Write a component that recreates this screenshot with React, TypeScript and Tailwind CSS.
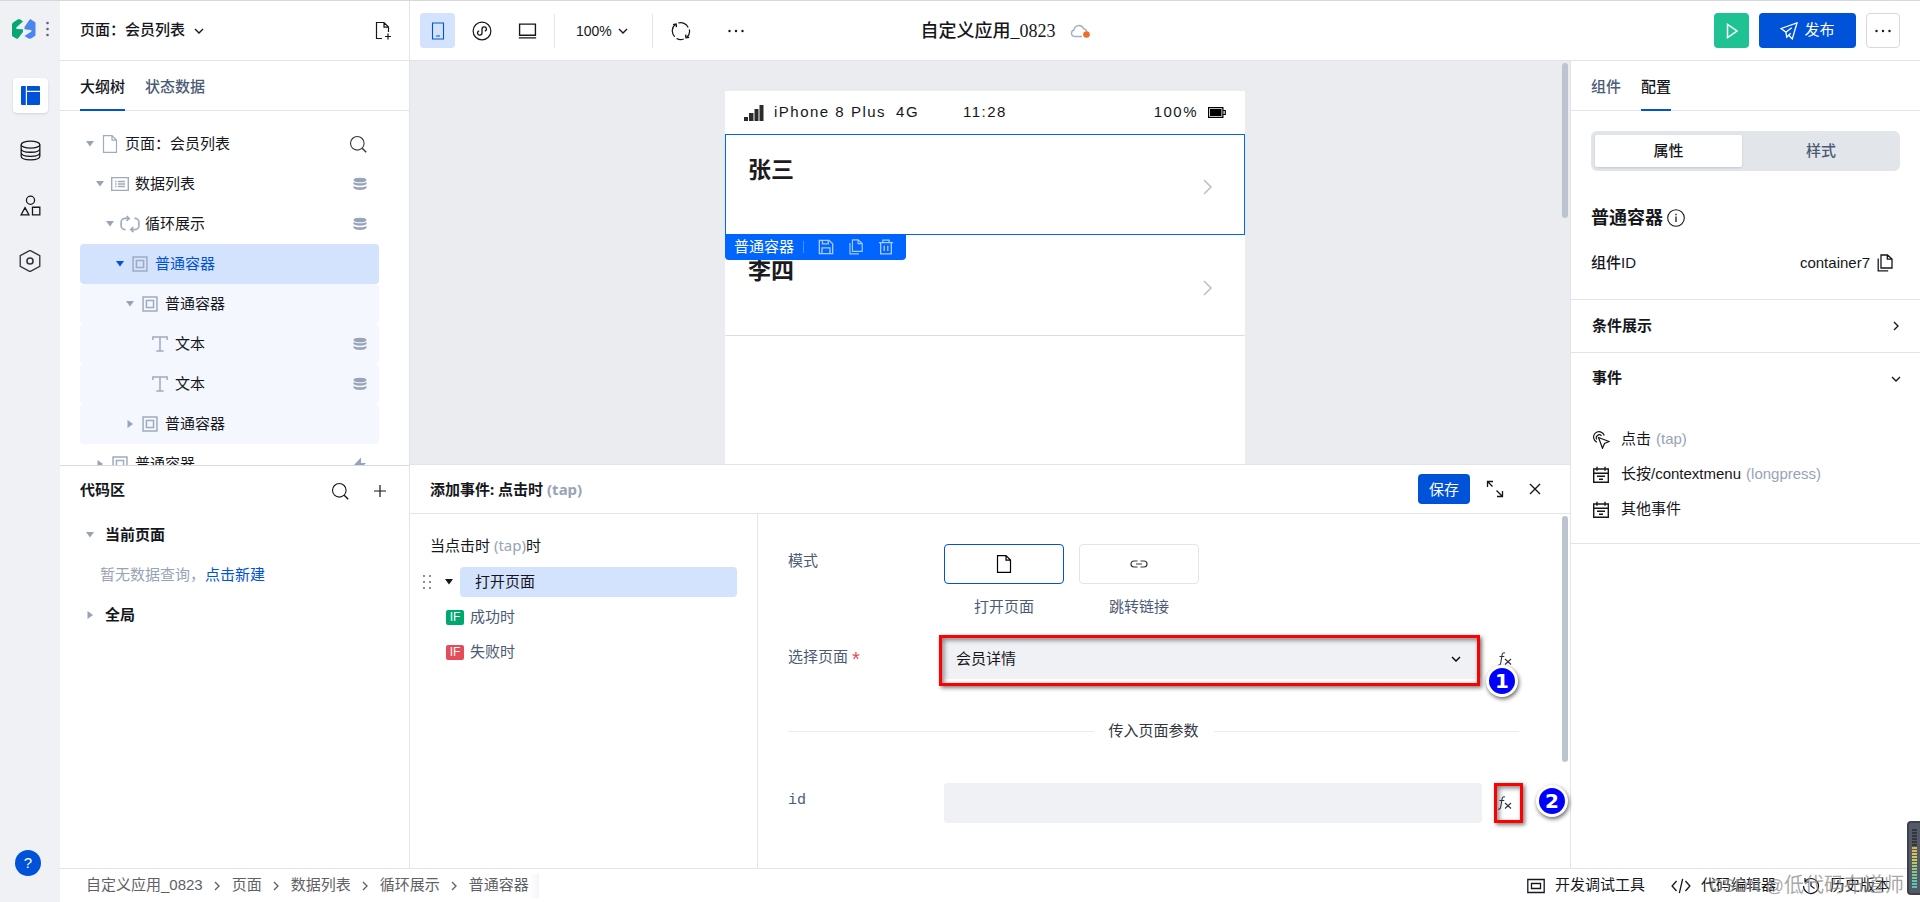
import type { ReactNode } from "react";
import clsx from "clsx";

type IconProps = {
  size?: number;
  className?: string;
  children?: ReactNode;
};

function Icon({ size = 18, className, children }: IconProps) {
  return (
    <svg
      width={size}
      height={size}
      viewBox="0 0 18 18"
      fill="none"
      stroke="currentColor"
      strokeWidth="1.1"
      className={clsx("shrink-0", className)}
      aria-hidden="true"
    >
      {children}
    </svg>
  );
}

const ChevronDown = ({ className }: IconProps) => (
  <Icon size={12} className={className}>
    <path d="M3 6l6 6 6-6" strokeWidth="2" />
  </Icon>
);

const ChevronRight = ({ className }: IconProps) => (
  <Icon size={12} className={className}>
    <path d="M6 3l6 6-6 6" strokeWidth="2" />
  </Icon>
);

const FileIcon = ({ className, size }: IconProps) => (
  <Icon className={className} size={size}>
    <path d="M2.500 .6h8.500l4.500 4.500v12.300h-13z M11 .6v4.500h4.500" strokeWidth="1.200" />
  </Icon>
);

const SearchIcon = () => (
  <Icon>
    <circle cx="8.300" cy="8.300" r="6.800" />
    <path d="M13.200 13.200l4 4" strokeWidth="1.400" />
  </Icon>
);

const CopyIcon = ({ className, size }: IconProps) => (
  <Icon className={className} size={size}>
    <path d="M5 1h6.500l4.500 4v9H5z M11.300 1v4.200H16 M2.200 4.500v12.300h10" strokeWidth="1.300" />
  </Icon>
);

const ContainerIcon = () => (
  <Icon size={16}>
    <path d="M1.200 1.200h15.600v15.600H1.200z M5 5h8v8H5z" strokeWidth="1.700" />
  </Icon>
);

const ListIcon = () => (
  <Icon>
    <path d="M.7 2.600h16.600v12.800H.7z" strokeWidth="1.400" />
    <path d="M4 6.500h1.500M4 9h1.500M4 11.500h1.500M7 6.500h7M7 9h7M7 11.500h7" strokeWidth="1.300" />
  </Icon>
);

const LoopIcon = () => (
  <Icon size={20}>
    <path
      d="M5 14H4.500a3.500 3.500 0 0 1-3.500-3.500V7.500A3.500 3.500 0 0 1 4.500 4H8 M6 1.800L8.300 4 6 6.300 M13 4h.5A3.500 3.500 0 0 1 17 7.500v3a3.500 3.500 0 0 1-3.500 3.500H10 M12 11.700L9.700 14l2.300 2.300"
      strokeWidth="1.500"
    />
  </Icon>
);

const TextIcon = () => (
  <Icon size={16}>
    <path d="M1 4.500V1.200h16v3.300 M9 1.200v15.600 M4.800 16.800h8.400" strokeWidth="1.700" />
  </Icon>
);

const DataIcon = () => (
  <svg width="14" height="14" viewBox="0 0 14 14" fill="currentColor" aria-hidden="true">
    <ellipse cx="7" cy="3" rx="6.500" ry="2.300" />
    <path d="M.5 5c2.500 1.800 10.500 1.800 13 0v2c-2.500 2.300-10.500 2.300-13 0z" />
    <path d="M.5 9c2.500 1.800 10.500 1.800 13 0v1.700c-2 3-11 3-13 0z" />
  </svg>
);

const BoltIcon = () => (
  <svg width="14" height="14" viewBox="0 0 14 14" fill="currentColor" aria-hidden="true">
    <path d="M8 .5L1 8h5l-1 6 8-8H8z" />
  </svg>
);

const CalendarIcon = () => (
  <Icon>
    <path d="M1.700 3h14.600v13.300H1.700z M1.700 7.200h14.600 M5 .8v4 M13 .8v4 M5 10.300h8 M7 13.300h4" strokeWidth="1.400" />
  </Icon>
);

const TapIcon = () => (
  <Icon>
    <path d="M6.500 6.500l10.500 4-4.500 2-2 4.800z" strokeWidth="1.200" />
    <path d="M5 11.300A5.500 5.500 0 1 1 12.300 4.500 M4.800 8.500A3 3 0 0 1 9.500 4.800" strokeWidth="1.200" />
  </Icon>
);

const FxIcon = () => (
  <svg width="14" height="14" viewBox="0 0 14 14" fill="none" stroke="#33363f" strokeWidth="1.100" aria-hidden="true">
    <path d="M7 1C5 .3 4.400 1.300 4.100 3L2.800 10.500C2.500 12.500 1.800 13.500.3 12.900 M1.500 4.500h4.800 M7 7l6 5.500 M13 7L7 12.500" />
  </svg>
);

const Caret = ({ open = true, className }: { open?: boolean; className?: string }) => (
  <svg width="8" height="8" viewBox="0 0 8 8" fill="currentColor" className={clsx("shrink-0", className)} aria-hidden="true">
    {open ? <path d="M0 1h8L4 6.500z" /> : <path d="M1.500 0v8L7 4z" />}
  </svg>
);

const Dots = () => (
  <svg width="18" height="4" viewBox="0 0 18 4" fill="#15171c" aria-hidden="true">
    <circle cx="2.500" cy="2" r="1.200" />
    <circle cx="9" cy="2" r="1.200" />
    <circle cx="15.500" cy="2" r="1.200" />
  </svg>
);

type TreeNode = {
  label: string;
  depth: number;
  icon: ReactNode;
  open?: boolean;
  leaf?: boolean;
  state?: "selected" | "child";
  end?: ReactNode;
};

const treeNodes: TreeNode[] = [
  { label: "页面：会员列表", depth: 0, icon: <FileIcon />, end: <SearchIcon /> },
  { label: "数据列表", depth: 1, icon: <ListIcon />, end: <DataIcon /> },
  { label: "循环展示", depth: 2, icon: <LoopIcon />, end: <DataIcon /> },
  { label: "普通容器", depth: 3, icon: <ContainerIcon />, state: "selected" },
  { label: "普通容器", depth: 4, icon: <ContainerIcon />, state: "child" },
  { label: "文本", depth: 5, icon: <TextIcon />, leaf: true, state: "child", end: <DataIcon /> },
  { label: "文本", depth: 5, icon: <TextIcon />, leaf: true, state: "child", end: <DataIcon /> },
  { label: "普通容器", depth: 4, icon: <ContainerIcon />, open: false, state: "child" },
  { label: "普通容器", depth: 1, icon: <ContainerIcon />, open: false, end: <BoltIcon /> },
];

const crumbs = ["自定义应用_0823", "页面", "数据列表", "循环展示", "普通容器"];

const events = [
  { label: "点击", hint: "(tap)", icon: <TapIcon /> },
  { label: "长按/contextmenu", hint: "(longpress)", icon: <CalendarIcon /> },
  { label: "其他事件", hint: "", icon: <CalendarIcon /> },
];

const meterBars = [
  "bg-[#33363f]", "bg-[#33363f]", "bg-[#33363f]", "bg-[#33363f]", "bg-[#33363f]", "bg-[#33363f]",
  "bg-[#d9b24a]", "bg-[#dcb94c]", "bg-[#dbc350]", "bg-[#d3cb55]", "bg-[#c4cd5c]", "bg-[#b3cd63]",
  "bg-[#a3cd6c]", "bg-[#94cc75]", "bg-[#86cb80]", "bg-[#79ca8b]", "bg-[#6dc998]", "bg-[#62c8a5]",
  "bg-[#58c8b0]", "bg-[#4fc8ba]",
];

function Rail() {
  return (
    <nav className="flex w-[60px] shrink-0 flex-col items-center bg-[#f0f1f5]">
      <div className="mt-4 flex h-6 w-full items-center gap-2.5 pl-3">
        <svg width="24" height="20" viewBox="0 0 24 20" aria-hidden="true">
          <path d="M0 5.500Q0 4 1.500 3.300L6 .3 8 .3 11 2.500 4.500 8.300Q3.300 9.500 5 10L11 10.300 11 13 6 19.500 4.500 19.800 0 17z" fill="#07a870" />
          <path d="M23.500 15.500Q23.500 16.800 22.300 17.500L18.500 19.800 16.500 19.500 12.500 17 19 12.800Q20.500 11.500 18.500 11L12.500 10.300V8L17 1.500 18.300 0 23.500 3.500z" fill="#4a86f0" />
        </svg>
        <svg width="3" height="16" viewBox="0 0 3 16" fill="#5a6577" aria-hidden="true">
          <circle cx="1.500" cy="2" r="1.300" />
          <circle cx="1.500" cy="8" r="1.300" />
          <circle cx="1.500" cy="14" r="1.300" />
        </svg>
      </div>
      <button type="button" aria-label="页面设计" className="mt-[37px] grid size-[35px] place-items-center rounded bg-white text-[#0052d9] shadow">
        <svg width="19" height="19" viewBox="0 0 19 19" fill="currentColor" aria-hidden="true">
          <path d="M1 0h3.800v19H1a1 1 0 0 1-1-1V1a1 1 0 0 1 1-1z M6 0h12a1 1 0 0 1 1 1v3.800H6z M6 6h13v12a1 1 0 0 1-1 1H6z" />
        </svg>
      </button>
      <button type="button" aria-label="数据" className="mt-5 grid size-[35px] place-items-center">
        <Icon size={21}>
          <ellipse cx="9" cy="4" rx="8" ry="3" />
          <path d="M1 4v10c0 4 16 4 16 0V4 M1 7.500c0 4 16 4 16 0 M1 11c0 4 16 4 16 0" />
        </Icon>
      </button>
      <button type="button" aria-label="组件" className="mt-5 grid size-[35px] place-items-center">
        <Icon size={21}>
          <circle cx="9" cy="4.500" r="3.500" />
          <path d="M4.300 10.800L7.700 17H.9z M10.700 10.500H17V17h-6.300z" />
        </Icon>
      </button>
      <button type="button" aria-label="设置" className="mt-5 grid size-[35px] place-items-center text-[#33363f]">
        <Icon size={22}>
          <path d="M9 .3l8 4.400v8.600L9 17.700l-8-4.400V4.700z" />
          <circle cx="9" cy="9" r="2.500" strokeWidth="1.300" />
        </Icon>
      </button>
      <button type="button" className="mt-auto mr-1 mb-[26px] size-[26px] rounded-full bg-[#0052d9] text-white">
        ?
      </button>
    </nav>
  );
}

function Header() {
  return (
    <header className="grid h-[60px] shrink-0 grid-cols-[1fr_auto_1fr] items-center border-b border-[#e1e4ea]">
      <div className="flex h-full items-center">
        <div className="flex h-full w-[350px] items-center justify-between border-r border-[#e1e4ea] pr-4 pl-5">
          <button type="button" className="flex items-center gap-2 font-medium">
            页面：会员列表
            <ChevronDown />
          </button>
          <button type="button" aria-label="新建页面">
            <svg width="20" height="20" viewBox="0 0 20 20" fill="none" stroke="currentColor" strokeWidth="1.200" aria-hidden="true">
              <path d="M9 17.500H3.500v-16H11l4.500 4.500v5 M11 1.500v4.700h4.500 M15 12.500v6 M12 15.500h6" />
            </svg>
          </button>
        </div>
        <button type="button" aria-label="手机" className="ml-2.5 grid size-[35px] place-items-center rounded bg-[#d3e2fd] text-[#0052d9]">
          <Icon>
            <path d="M3.500 1h11v16h-11z M7 14h4" />
          </Icon>
        </button>
        <button type="button" aria-label="小程序" className="ml-[17px]">
          <Icon size={20}>
            <circle cx="9" cy="9" r="8" />
            <path d="M6.500 8.800a2 2 0 1 0 2.500 2V7.200a2 2 0 1 1 2.500 2" strokeWidth="1.200" />
          </Icon>
        </button>
        <button type="button" aria-label="电脑" className="ml-[26px]">
          <Icon size={19}>
            <path d="M1.500 3h15v10.500h-15z M.8 16h16.400" strokeWidth="1.300" />
          </Icon>
        </button>
        <div className="ml-[17px] h-[34px] w-px bg-[#e1e4ea]" />
        <button type="button" className="ml-[21px] flex items-center gap-[5px] text-sm">
          100%
          <ChevronDown />
        </button>
        <div className="ml-[23px] h-[34px] w-px bg-[#e1e4ea]" />
        <button type="button" aria-label="刷新" className="ml-[18px]">
          <Icon size={20}>
            <path d="M3.300 14.200A7.600 7.600 0 0 1 4 3M6.500 1.800a7.600 7.600 0 0 1 9 4M16.500 7.500a7.600 7.600 0 0 1-2 7M11.500 16.200a7.600 7.600 0 0 1-6.500-.5" />
            <path d="M1.800 3.300L4.600 2.700l.3 2.800 M16.300 14.600l-2.800.5-.3-2.800" strokeWidth="1.300" />
          </Icon>
        </button>
        <button type="button" aria-label="更多" className="ml-9">
          <Dots />
        </button>
      </div>
      <h1 className="flex items-center gap-3.5 pl-[30px] font-[Liberation_Serif,Noto_Sans_CJK_SC,serif] text-lg font-medium">
        自定义应用_0823
        <svg width="20" height="14" viewBox="0 0 20 14" fill="none" stroke="#a3afc3" strokeWidth="1.400" aria-hidden="true">
          <path d="M12 12.500H4.500A3.300 3.300 0 0 1 4 6a5 5 0 0 1 9.600-1.300c2 .3 3 1.600 3.200 3" />
          <circle cx="16.500" cy="10.500" r="3.300" fill="#ed6d2d" stroke="none" />
        </svg>
      </h1>
      <div className="flex items-center justify-end gap-2.5 pr-5">
        <button type="button" aria-label="预览" className="grid size-[35px] place-items-center rounded bg-[#1fc292] text-white">
          <Icon>
            <path d="M4.500 2.500v13L14 9z" strokeWidth="1.500" />
          </Icon>
        </button>
        <button type="button" className="flex h-[35px] w-[97px] items-center justify-center gap-1.5 rounded bg-[#0052d9] text-white">
          <Icon>
            <path d="M1 6.500L17 .9 12.300 17l-3.600-3.800-2 2-.8-5z M5.900 10.200l5.800-4.500 M8.700 13.200l2-1.900" strokeWidth="1.300" />
          </Icon>
          发布
        </button>
        <button type="button" aria-label="更多操作" className="grid h-[35px] w-[34px] place-items-center rounded border border-[#d5d9e2]">
          <Dots />
        </button>
      </div>
    </header>
  );
}

function TreeRow({ node }: { node: TreeNode }) {
  const selected = node.state === "selected";
  return (
    <li
      className={clsx(
        "flex h-10 items-center rounded pr-3",
        selected && "bg-[#d3e2fd] text-[#0052d9]",
        node.state === "child" && "bg-[#f4f7fe]"
      )}
      style={{ paddingLeft: 6 + node.depth * 10 }}
    >
      <span className={clsx("mr-1.5 w-2", selected ? "text-[#0052d9]" : "text-[#97a3b7]")}>
        {!node.leaf && <Caret open={node.open ?? true} />}
      </span>
      <span className="grid w-5 place-items-center text-[#a0abbf]">{node.icon}</span>
      <span className="ml-[5px]">{node.label}</span>
      <span className={clsx("ml-auto", node.depth > 0 ? "text-[#97a3b7]" : "text-[#33363f]")}>{node.end}</span>
    </li>
  );
}

function Outline() {
  return (
    <aside className="flex w-[350px] shrink-0 flex-col border-r border-[#e1e4ea]">
      <div className="flex h-[50px] shrink-0 gap-5 border-b border-[#e1e4ea] px-5 font-medium" role="tablist">
        <button type="button" role="tab" aria-selected="true" className="-mb-px border-b-2 border-[#0052d9] pt-1">
          大纲树
        </button>
        <button type="button" role="tab" aria-selected="false" className="-mb-px border-b-2 border-transparent pt-1 text-[#4b5b76]">
          状态数据
        </button>
      </div>
      <ul className="min-h-0 flex-1 overflow-hidden pt-[13px] pr-[30px] pl-5">
        {treeNodes.map((node, i) => (
          <TreeRow key={i} node={node} />
        ))}
      </ul>
      <section className="h-[403px] shrink-0 border-t border-[#d5d9e2] px-5">
        <div className="flex h-[49px] items-center">
          <h2 className="flex-1 font-bold">代码区</h2>
          <button type="button" aria-label="搜索">
            <SearchIcon />
          </button>
          <button type="button" aria-label="新建" className="ml-[22px]">
            <Icon>
              <path d="M9 3v12M3 9h12" strokeWidth="1.200" />
            </Icon>
          </button>
        </div>
        <div className="flex h-10 items-center gap-[11px] pl-1.5 font-bold">
          <Caret className="text-[#97a3b7]" />
          当前页面
        </div>
        <p className="flex h-10 items-center pl-5 text-[#97a3b7]">
          暂无数据查询，
          <a href="#new" className="text-[#0052d9]">
            点击新建
          </a>
        </p>
        <div className="flex h-10 items-center gap-[11px] pl-1.5 font-bold">
          <Caret open={false} className="text-[#97a3b7]" />
          全局
        </div>
      </section>
    </aside>
  );
}

function ListItem({ name, active }: { name: string; active?: boolean }) {
  return (
    <div
      className={clsx(
        "relative flex h-[101px] items-center justify-between border pr-7 pl-[22px]",
        active ? "border-[#0064ff]" : "border-transparent border-b-[#d9dbdf]"
      )}
    >
      <h3 className="mb-[30px] text-[23px] leading-8 font-bold text-[#1c1c1e]">{name}</h3>
      <Icon className="mt-1 text-[#bfc1c6]">
        <path d="M6 2l7 7-7 7" strokeWidth="1.600" />
      </Icon>
      {active && (
        <div className="absolute top-full -left-px z-10 flex h-[26px] w-[181px] items-center rounded-b bg-[#0064ff] pl-[9px] text-white">
          普通容器
          <span className="mr-3.5 ml-[9px] h-3 w-px bg-[#4d93ff]" />
          <div className="flex gap-3.5 text-[#a9c9ff]">
            <Icon size={16}>
              <path d="M1.500 1.500h11l4 4v11h-15z M5 1.500v4h6.500v-4 M4.500 16.500V10h9v6.500" strokeWidth="1.500" />
            </Icon>
            <CopyIcon size={16} />
            <Icon size={16}>
              <path d="M1 4h16 M5.500 4V1.200h7V4 M3 4v12.800h12V4 M7 7.500v6 M11 7.500v6" strokeWidth="1.500" />
            </Icon>
          </div>
        </div>
      )}
    </div>
  );
}

function Canvas() {
  return (
    <div className="relative flex min-h-0 flex-1 justify-center overflow-hidden bg-[#ebecf0] pt-[30px] pr-2.5">
      <div className="w-[520px] bg-white">
        <div className="grid h-[43px] grid-cols-3 items-center px-[19px] tracking-widest">
          <div className="flex items-center gap-2.5 whitespace-nowrap">
            <svg width="20" height="16" viewBox="0 0 20 16" fill="#2b2b2b" className="shrink-0" aria-hidden="true">
              <path d="M0 12h4v4H0z M5 8h4.500v8H5z M10.500 4h4v12h-4z M15.500 0h4v16h-4z" />
            </svg>
            <span>iPhone 8 Plus</span>
            <span>4G</span>
          </div>
          <span className="text-center">11:28</span>
          <div className="flex items-center justify-end gap-2.5">
            100%
            <svg width="18" height="11" viewBox="0 0 18 11" className="shrink-0" aria-hidden="true">
              <path d="M.6.600h14.300v9.800H.6z M15 3.500h2.300v4H15" fill="none" stroke="#000" strokeWidth="1.200" />
              <path d="M2 2h11.500v7H2z" />
            </svg>
          </div>
        </div>
        <ListItem name="张三" active />
        <ListItem name="李四" />
      </div>
      <div className="absolute top-0.5 right-0.5 h-[155px] w-1.5 rounded-full bg-[#bcc4d0]" />
    </div>
  );
}

const Badge = ({ children, className }: { children: ReactNode; className: string }) => (
  <span
    className={clsx(
      "absolute grid size-8 place-items-center rounded-full border-3 border-white bg-[#0000ff] font-[DejaVu_Sans,sans-serif] text-xl leading-none font-bold text-white shadow-[1px_2px_4px_rgba(0,0,0,0.6)]",
      className
    )}
  >
    {children}
  </span>
);

const redFrame =
  "pointer-events-none absolute border-3 border-[#ff0000] shadow-[2px_2px_4px_rgba(0,0,0,0.5),inset_2px_2px_5px_rgba(0,0,0,0.5)]";

function ActionForm() {
  return (
    <form className="relative min-w-0 flex-1 pt-[30px] pr-[51px] pl-[30px] leading-[22px] text-[#4b5b76]">
      <div className="flex">
        <span className="w-[156px] shrink-0 pt-1.5">模式</span>
        <div className="flex gap-[15px] text-center">
          <label className="w-[120px]">
            <input type="radio" name="mode" defaultChecked className="peer sr-only" />
            <span className="mb-3 grid h-10 place-items-center rounded border border-[#e1e4ea] text-black peer-checked:border-[#0052d9]">
              <FileIcon />
            </span>
            打开页面
          </label>
          <label className="w-[120px]">
            <input type="radio" name="mode" className="peer sr-only" />
            <span className="mb-3 grid h-10 place-items-center rounded border border-[#e1e4ea] text-[#33363f] peer-checked:border-[#0052d9]">
              <Icon>
                <path d="M7.500 6H4a3 3 0 0 0 0 6h3.500 M10.500 6H14a3 3 0 0 1 0 6h-3.500 M6 9h6" strokeWidth="1.200" />
              </Icon>
            </span>
            跳转链接
          </label>
        </div>
      </div>

      <div className="mt-[21px] flex">
        <label htmlFor="page" className="w-[156px] shrink-0 pt-[7px]">
          选择页面
          <span className="ml-1 align-sub text-xl leading-none text-[#e34d59]">*</span>
        </label>
        <div className="relative flex-1">
          <select id="page" className="h-10 w-full appearance-none rounded bg-[#f0f1f5] px-3 text-[#15171c]">
            <option>会员详情</option>
          </select>
          <ChevronDown className="pointer-events-none absolute top-3.5 right-5 text-black" />
          <div className={clsx(redFrame, "-top-1 right-0.5 -bottom-[7px] -left-[5px]")} />
        </div>
        <button type="button" aria-label="选择页面表达式" className="relative ml-4 w-[21px]">
          <FxIcon />
          <Badge className="top-[26px] -left-3">1</Badge>
        </button>
      </div>

      <div className="my-[41px] flex items-center gap-[15px] text-[#33363f]">
        <div className="h-px flex-1 bg-[#e9ebef]" />
        传入页面参数
        <div className="h-px flex-1 bg-[#e9ebef]" />
      </div>

      <div className="flex">
        <label htmlFor="param-id" className="w-[156px] shrink-0 pt-[7px] font-[Liberation_Mono,monospace]">
          id
        </label>
        <input id="param-id" className="h-10 min-w-0 flex-1 rounded bg-[#f0f1f5] px-3 text-[#15171c]" />
        <button type="button" aria-label="id表达式" className="relative ml-4 w-[21px]">
          <FxIcon />
          <span className={clsx(redFrame, "inset-y-0 -right-1 -left-1")} />
          <Badge className="top-0.5 left-[38px]">2</Badge>
        </button>
      </div>
      <div className="absolute top-0.5 right-0.5 h-[246px] w-1.5 rounded-full bg-[#bcc4d0]" />
    </form>
  );
}

function EventPanel() {
  return (
    <section className="flex h-[404px] shrink-0 flex-col border-t border-[#e1e4ea]">
      <div className="flex h-[49px] shrink-0 items-center border-b border-[#e1e4ea] px-5 font-[Noto_Sans,Noto_Sans_CJK_SC,sans-serif]">
        <h2 className="flex-1 font-bold">
          添加事件: 点击时 <span className="text-[#97a3b7]">(tap)</span>
        </h2>
        <button type="button" className="h-[30px] w-[52px] rounded bg-[#0052d9] text-white">
          保存
        </button>
        <button type="button" aria-label="展开" className="ml-4">
          <Icon>
            <path d="M1.500 7V1.500H7 M1.500 1.500l5 5 M16.500 11v5.500H11 M16.500 16.500l-6-6" strokeWidth="1.300" />
          </Icon>
        </button>
        <button type="button" aria-label="关闭" className="mr-1.5 ml-[22px]">
          <Icon>
            <path d="M4 4l10 10M14 4L4 14" strokeWidth="1.400" />
          </Icon>
        </button>
      </div>
      <div className="flex min-h-0 flex-1">
        <div className="w-[348px] shrink-0 border-r border-[#e1e4ea] pt-5 pr-5 pl-3">
          <p className="pl-2 font-[Noto_Sans,Noto_Sans_CJK_SC,sans-serif] leading-[22px]">
            当点击时 <span className="text-[#97a3b7]">(tap)</span>时
          </p>
          <div className="mt-[11px] flex h-[30px] items-center">
            <svg width="10" height="16" viewBox="0 0 10 16" fill="#8b8f98" aria-hidden="true">
              <path d="M1 1h2v2H1z M7 1h2v2H7z M1 7h2v2H1z M7 7h2v2H7z M1 13h2v2H1z M7 13h2v2H7z" />
            </svg>
            <Caret className="ml-[13px]" />
            <button type="button" className="ml-[7px] h-full flex-1 rounded bg-[#d3e2fd] pl-[15px] text-left">
              打开页面
            </button>
          </div>
          {[
            { label: "成功时", color: "bg-[#00a870]" },
            { label: "失败时", color: "bg-[#e34d59]" },
          ].map((branch) => (
            <div key={branch.label} className="mt-[5px] flex h-[30px] items-center gap-1.5 pl-6 text-[#4b5b76]">
              <span className={clsx("grid h-[15px] w-[18px] place-items-center rounded-xs text-xs leading-none text-white", branch.color)}>
                IF
              </span>
              {branch.label}
            </div>
          ))}
        </div>
        <ActionForm />
      </div>
    </section>
  );
}

function Inspector() {
  return (
    <aside className="w-[350px] shrink-0 border-l border-[#e1e4ea]">
      <div className="flex h-[50px] gap-5 border-b border-[#e1e4ea] px-5 font-medium" role="tablist">
        <button type="button" role="tab" aria-selected="false" className="-mb-px border-b-2 border-transparent pt-1 text-[#4b5b76]">
          组件
        </button>
        <button type="button" role="tab" aria-selected="true" className="-mb-px border-b-2 border-[#0052d9] pt-1">
          配置
        </button>
      </div>
      <div className="h-[189px] border-b border-[#e1e4ea] px-5 pt-5">
        <div className="flex h-10 rounded-md bg-[#e2e5ea] py-1 pl-1 font-medium">
          <button type="button" className="w-[147px] rounded-xs bg-white shadow-sm">
            属性
          </button>
          <button type="button" className="flex-1 text-[#4b5b76]">
            样式
          </button>
        </div>
        <h2 className="mt-[33px] flex items-center gap-1 text-lg leading-7 font-bold text-[#15171c]">
          普通容器
          <Icon>
            <circle cx="9" cy="9" r="8.300" />
            <path d="M9 7.500V13 M9 4.800v1.400" strokeWidth="1.300" />
          </Icon>
        </h2>
        <div className="mt-5 flex items-center">
          <span className="flex-1 font-medium">组件ID</span>
          container7
          <button type="button" aria-label="复制" className="mr-1.5 ml-1.5">
            <CopyIcon />
          </button>
        </div>
      </div>
      <button type="button" className="flex h-[53px] w-full items-center justify-between border-b border-[#e1e4ea] pr-[18px] pl-[21px] font-bold">
        条件展示
        <ChevronRight />
      </button>
      <div className="h-[191px] border-b border-[#e1e4ea] pr-[18px] pl-[21px]">
        <button type="button" className="flex h-[51px] w-full items-center justify-between font-bold">
          事件
          <ChevronDown />
        </button>
        <ul className="pt-[18px]">
          {events.map((event) => (
            <li key={event.label} className="flex h-[35px] items-center">
              {event.icon}
              <span className="mr-[5px] ml-[11px]">{event.label}</span>
              <span className="text-[#97a3b7]">{event.hint}</span>
            </li>
          ))}
        </ul>
      </div>
    </aside>
  );
}

function Footer() {
  return (
    <footer className="relative flex h-[34px] shrink-0 items-center justify-between border-t border-[#e1e4ea] pr-[30px] pl-[26px]">
      <nav className="flex items-center text-[#5f6166]">
        {crumbs.map((crumb, i) => (
          <div key={crumb} className="flex items-center">
            {i > 0 && <ChevronRight className="mr-[9px] ml-2" />}
            <a href="#crumb">{crumb}</a>
          </div>
        ))}
        <span className="h-6 w-2.5 bg-linear-to-r from-white to-[#f4f5f8]" />
      </nav>
      <div className="flex items-center gap-[26px]">
        <button type="button" className="flex items-center gap-2.5">
          <Icon>
            <path d="M.8 2.500h16.400v13H.8z M4.500 6.500h9v5h-9z" strokeWidth="1.300" />
          </Icon>
          开发调试工具
        </button>
        <button type="button" className="flex items-center gap-2.5">
          <Icon size={20}>
            <path d="M5 4.500L1 9l4 4.500 M13 4.500L17 9l-4 4.500 M10.500 2.500l-3 13" strokeWidth="1.200" />
          </Icon>
          代码编辑器
        </button>
        <button type="button" className="flex items-center gap-2.5">
          <Icon>
            <path d="M3 4.500A7.500 7.500 0 1 1 1.500 9 M3 1v4h4 M9 4.500V9l3.500 2.500" strokeWidth="1.200" />
          </Icon>
          历史版本
        </button>
      </div>
      <span className="pointer-events-none absolute right-4 text-xl text-[#8a8a8a]/75">
        <span className="text-lg">CSDN @</span>低代码布道师
      </span>
      <div className="absolute right-0 bottom-[7px] flex h-[74px] w-[13px] flex-col gap-px rounded-l border-2 border-r-0 border-[#3d414d] bg-[#555a69] px-[3px] pt-1.5">
        {meterBars.map((bar, i) => (
          <span key={i} className={clsx("h-0.5", bar)} />
        ))}
      </div>
    </footer>
  );
}

export default function App() {
  return (
    <div className="flex h-screen overflow-hidden border-t border-[#d6d7da] bg-white font-[Liberation_Sans,Noto_Sans_CJK_SC,sans-serif] text-[15px] text-[#15171c]">
      <Rail />
      <div className="flex min-w-0 flex-1 flex-col">
        <Header />
        <div className="flex min-h-0 flex-1">
          <Outline />
          <main className="flex min-w-0 flex-1 flex-col">
            <Canvas />
            <EventPanel />
          </main>
          <Inspector />
        </div>
        <Footer />
      </div>
    </div>
  );
}
